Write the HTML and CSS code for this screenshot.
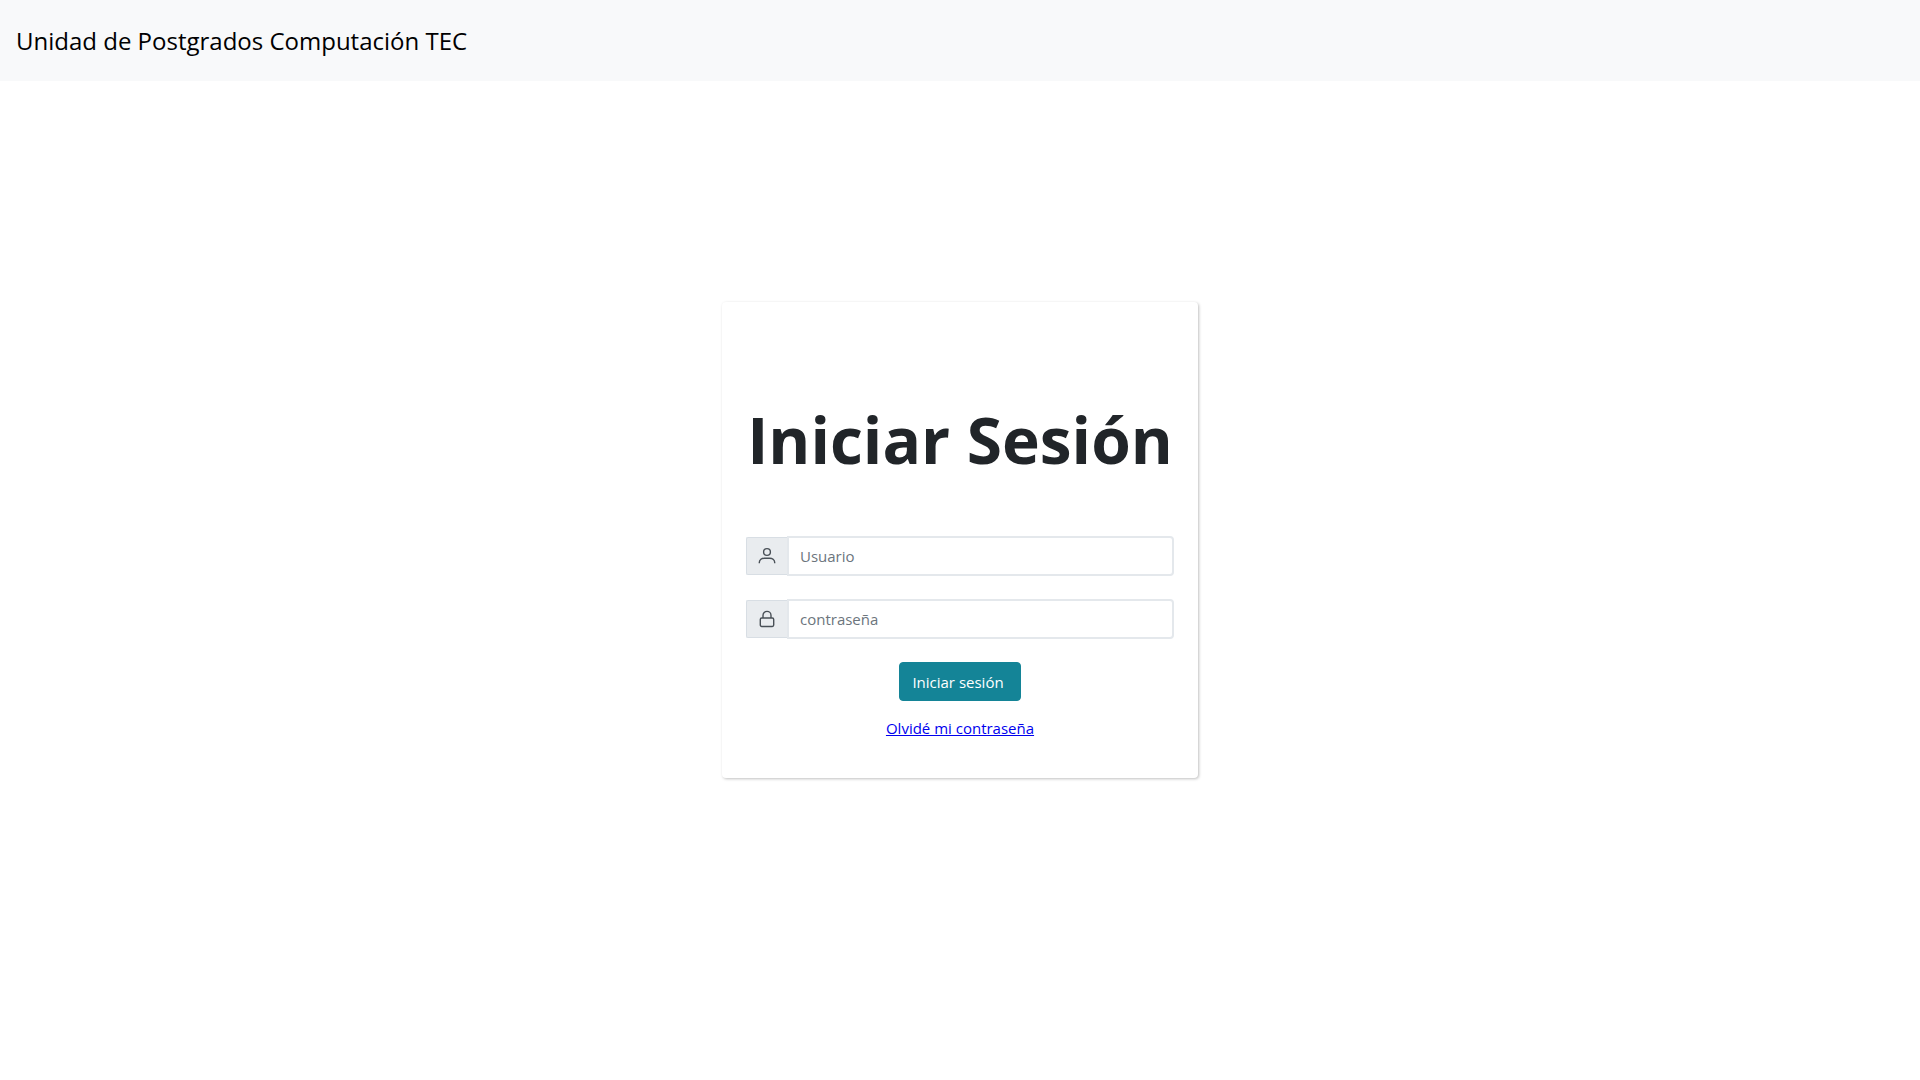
FILE: index.html
```html
<!DOCTYPE html>
<html lang="es">
<head>
<meta charset="utf-8">
<meta name="viewport" content="width=device-width, initial-scale=1">
<title>Unidad de Postgrados Computación TEC</title>
<link rel="stylesheet" href="styles.css">
</head>
<body>
<header class="navbar"><a class="brand" href="#">Unidad de Postgrados Computación TEC</a></header>
<main class="page">
  <form class="card">
    <h1 class="title">Iniciar Sesión</h1>
    <div class="field">
      <label class="addon" for="user" aria-label="Usuario">
        <svg class="icon" viewBox="0 0 18 18" aria-hidden="true"><circle cx="9" cy="5" r="3.4"/><path d="M1.3 16.2v-.6c0-2.8 2.5-4.4 5-4.4h5.4c2.5 0 5 1.6 5 4.4v.6"/></svg>
      </label>
      <input class="input" id="user" type="text" placeholder="Usuario">
    </div>
    <div class="field">
      <label class="addon" for="password" aria-label="Contraseña">
        <svg class="icon" viewBox="0 0 18 18" aria-hidden="true"><rect x="2.3" y="8" width="13.4" height="8.5" rx="1.4"/><path d="M5 8V5.4a4 4 0 0 1 8 0V8"/></svg>
      </label>
      <input class="input" id="password" type="password" placeholder="contraseña">
    </div>
    <button class="submit" type="submit">Iniciar sesión</button>
    <a class="forgot" href="#">Olvidé mi contraseña</a>
  </form>
</main>
</body>
</html>
```
FILE: styles.css
```css
* { box-sizing: border-box; }
body {
  display: flex;
  flex-direction: column;
  min-height: 100vh;
  margin: 0;
  background: #fff;
  color: #212529;
  font: 15px/24px "Open Sans", sans-serif;
}
.navbar { padding: 24px 16px; background: #f8f9fa; }
.brand { display: block; color: #000; font-size: 24px; line-height: 33px; text-decoration: none; }
.page { display: flex; flex: 1; justify-content: center; align-items: flex-start; padding: 221px 16px 32px; }
.card {
  display: flex;
  flex-direction: column;
  align-items: center;
  width: 100%;
  max-width: 476px;
  padding: 88px 24px 38px;
  border-radius: 4px;
  box-shadow: 1px 1px 3px rgba(0, 0, 0, .25);
}
.title { margin: 0 0 47px; font-size: 64px; font-weight: 700; line-height: 99px; }
.field { display: flex; align-items: center; width: 100%; margin-bottom: 23px; }
.addon {
  display: flex;
  align-items: center;
  height: 38px;
  padding: 0 11px;
  border: 1px solid #d8dee4;
  border-right: 0;
  border-radius: 2px 0 0 2px;
  background: #e9ecef;
}
.icon { width: 18px; height: 18px; fill: none; stroke: #495057; stroke-width: 1.4; }
.input {
  flex: 1;
  min-width: 0;
  height: 40px;
  padding: 6px 11px;
  border: 2px solid #e4e8ec;
  border-radius: 0 4px 4px 0;
  background: #fff;
  color: #212529;
  font: inherit;
}
.input::placeholder { color: #6c757d; opacity: 1; }
.submit {
  height: 39px;
  margin-bottom: 15px;
  padding: 6px 16px 6px 12px;
  border: 1px solid #148497;
  border-radius: 4px;
  background: #148497;
  color: #fff;
  font: inherit;
}
.forgot { color: #00e; }
```
